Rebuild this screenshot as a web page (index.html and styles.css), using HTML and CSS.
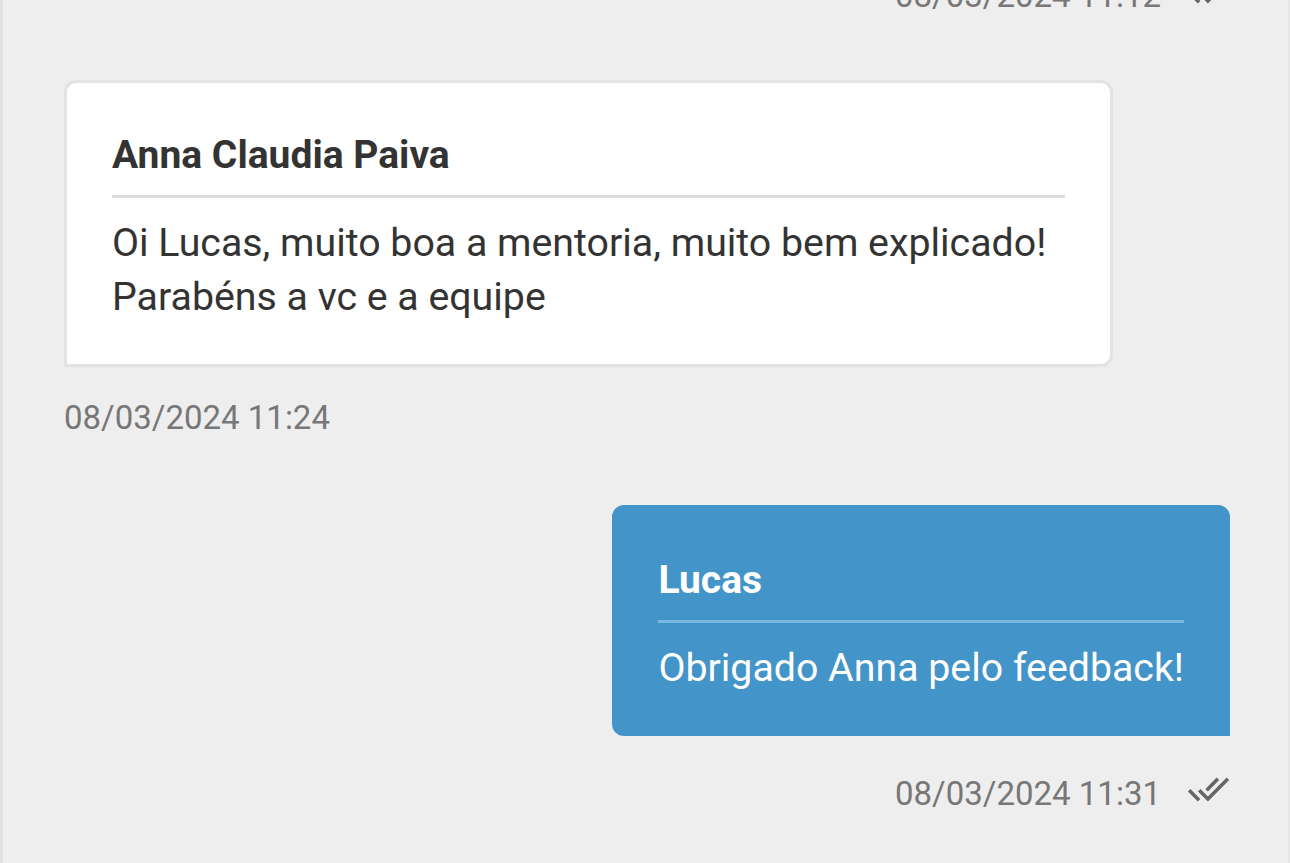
FILE: index.html
```
<!DOCTYPE html>
<html lang="pt-BR">
<head>
    <meta charset="UTF-8">
    <meta name="viewport" content="width=device-width, initial-scale=1.0">
    <title>Mensagens</title>
    <link rel="stylesheet" href="styles.css">
</head>
<body>

<div class="chat">
    <!-- mensagem anterior (cortada no topo) -->
    <div class="meta meta-out first">
        <span class="time">08/03/2024 11:12</span>
        <svg class="check" viewBox="0 3 24 18"><path d="M18 7l-1.41-1.41-6.34 6.34 1.41 1.41L18 7zm4.24-1.41L11.66 16.17 7.48 12l-1.41 1.41L11.66 19l12-12-1.42-1.41zM.41 13.41L6 19l1.41-1.41L1.83 12 .41 13.41z"/></svg>
    </div>

    <div class="msg msg-in">
        <div class="bubble">
            <div class="author">Anna Claudia Paiva</div>
            <div class="text">Oi Lucas, muito boa a mentoria, muito bem explicado! Parabéns a vc e a equipe</div>
        </div>
        <div class="meta">
            <span class="time">08/03/2024 11:24</span>
        </div>
    </div>

    <div class="msg msg-out">
        <div class="bubble">
            <div class="author">Lucas</div>
            <div class="text">Obrigado Anna pelo feedback!</div>
        </div>
        <div class="meta meta-out">
            <span class="time">08/03/2024 11:31</span>
            <svg class="check" viewBox="0 3 24 18"><path d="M18 7l-1.41-1.41-6.34 6.34 1.41 1.41L18 7zm4.24-1.41L11.66 16.17 7.48 12l-1.41 1.41L11.66 19l12-12-1.42-1.41zM.41 13.41L6 19l1.41-1.41L1.83 12 .41 13.41z"/></svg>
        </div>
    </div>
</div>

</body>
</html>
```

FILE: styles.css
```
/* conversa */
body {
    margin: 0;
    font-family: Roboto, "Liberation Sans", sans-serif;
    background-color: #eeeeee;
    overflow: hidden;
}
.chat {
    height: 900px;
    box-sizing: border-box;
    padding: 0 58px 0 61px;
    border-left: 3px solid #e1e1e1;
    border-right: 2px solid #e6e6e6;
}
.meta {
    display: flex;
    align-items: center;
    margin-top: 31px;
    color: #777777;
    font-size: 33px;
    line-height: 40px;
}
.meta-out {
    justify-content: flex-end;
    margin-top: 37px;
}
.meta.first {
    margin-top: -25px;
}
.check {
    width: 43px;
    height: 32px;
    margin-left: 26px;
    margin-bottom: 10px;
    fill: #666666;
}
.msg {
    display: flex;
    flex-direction: column;
    margin-top: 63px;
}
.msg-in {
    align-items: flex-start;
}
.msg-out {
    align-items: flex-end;
    margin-top: 67px;
}
.bubble {
    box-sizing: border-box;
    max-width: 90%;
    padding: 49px 45px 40px;
    border: 3px solid #e3e3e3;
    border-radius: 12px;
    background: #ffffff;
    color: #333333;
}
.msg-in .bubble {
    border-bottom-left-radius: 0;
}
.msg-out .bubble {
    padding: 49px 43px 38px;
    border-color: #4394c8;
    border-bottom-right-radius: 0;
    background: #4394c8;
    color: #ffffff;
}
.author {
    font-size: 39px;
    font-weight: bold;
    line-height: 46px;
    padding-bottom: 17px;
    border-bottom: 3px solid #dcdcdc;
}
.msg-out .author {
    border-bottom-color: #78b8e3;
}
.text {
    margin-top: 18px;
    font-size: 39.3px;
    line-height: 54px;
}
.msg-in .meta {
    align-self: flex-start;
}
.msg-out .meta {
    align-self: stretch;
}
```
